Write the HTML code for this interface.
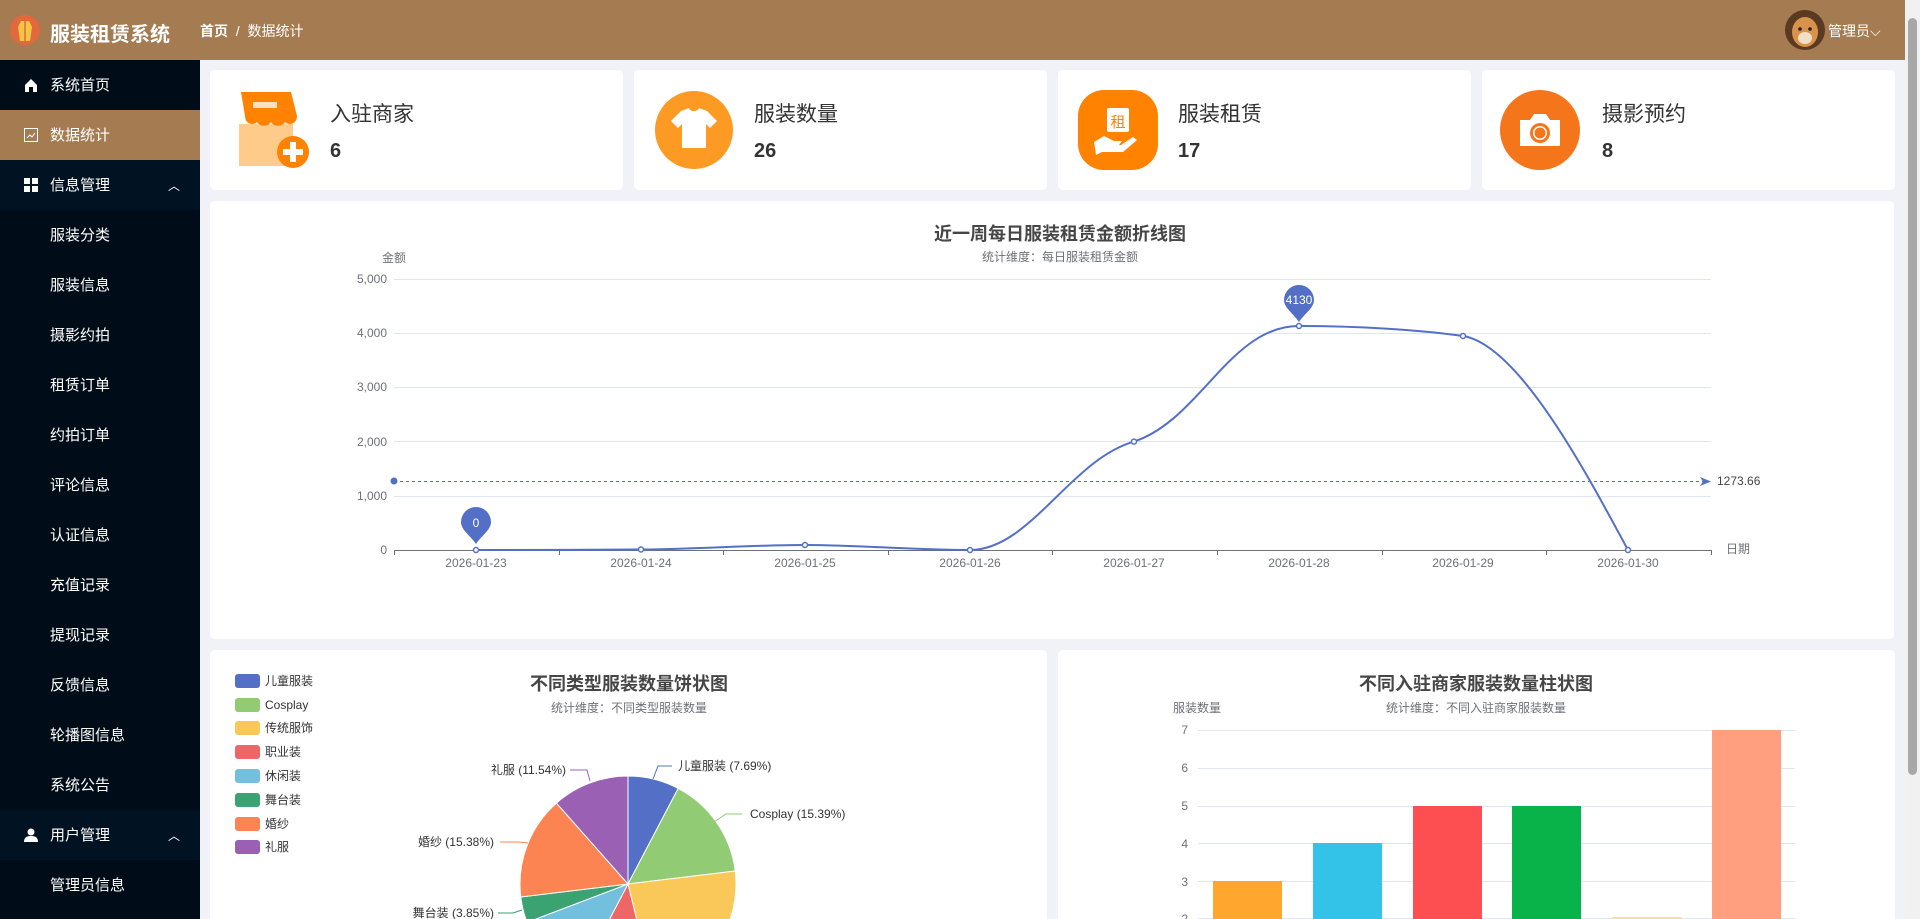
<!DOCTYPE html>
<html><head><meta charset="utf-8"><style>
*{margin:0;padding:0;box-sizing:border-box}
html,body{width:1920px;height:919px;overflow:hidden}
body{background:#f1f2f7;font-family:"Liberation Sans","Noto Sans CJK SC",sans-serif;position:relative}
.hd{position:absolute;left:0;top:0;width:1905px;height:60px;background:#a57b51;color:#fff}
.sb{position:absolute;left:0;top:60px;width:200px;height:859px;background:#000c17;overflow:hidden}
.it{position:absolute;left:0;width:200px;height:50px;line-height:52px;color:#fff;font-size:15px}
.card{position:absolute;background:#fff;border-radius:5px}
.lbl{position:absolute;font-size:21px;color:#333}
.num{position:absolute;font-size:20px;font-weight:bold;color:#333}
.leg{position:absolute;left:235px;font-size:12px;color:#333;height:14px;line-height:14px}
.leg i{display:inline-block;width:25px;height:14px;border-radius:3px;vertical-align:top;margin-right:5px}
</style></head><body>
<div class="hd">
 <svg style="position:absolute;left:10px;top:15px" width="30" height="30"><circle cx="15" cy="15" r="15" fill="#e3683b"/><path d="M11 6h8l3 6-2 14h-10l-2-14z" fill="#f6c545"/><path d="M15 6v20" stroke="#e3683b" stroke-width="1.5"/></svg>
 <div style="position:absolute;left:50px;top:18px;font-size:20px;font-weight:bold">服装租赁系统</div>
 <div style="position:absolute;left:200px;top:21px;font-size:14px"><b>首页</b> &nbsp;/&nbsp; 数据统计</div>
 <svg style="position:absolute;left:1785px;top:10px" width="40" height="40"><circle cx="20" cy="20" r="20" fill="#5a3a20"/><ellipse cx="20" cy="22" rx="13" ry="15" fill="#d9924c"/><ellipse cx="20" cy="28" rx="7" ry="6" fill="#f2e0c6"/><circle cx="15" cy="19" r="1.8" fill="#222"/><circle cx="25" cy="19" r="1.8" fill="#222"/></svg>
 <div style="position:absolute;left:1828px;top:21px;font-size:14px">管理员⌵</div>
</div>
<div class="sb">
 <div class="it" style="top:0;background:#000c17"><svg style="position:absolute;left:24px;top:18px" width="14" height="14"><path d="M7 1L1 7v7h4V9h4v5h4V7z" fill="#fff"/></svg><span style="margin-left:50px">系统首页</span></div>
 <div class="it" style="top:50px;background:#a57b51"><svg style="position:absolute;left:24px;top:18px" width="14" height="14"><rect x="0.5" y="0.5" width="13" height="13" fill="none" stroke="#fff"/><path d="M3 10l3-3 2 2 3-4" stroke="#fff" fill="none"/></svg><span style="margin-left:50px">数据统计</span></div>
 <div class="it" style="top:100px;background:#011323"><svg style="position:absolute;left:24px;top:18px" width="14" height="14"><rect x="0" y="0" width="6" height="6" fill="#fff"/><rect x="8" y="0" width="6" height="6" fill="#fff"/><rect x="0" y="8" width="6" height="6" fill="#fff"/><rect x="8" y="8" width="6" height="6" fill="#fff"/></svg><span style="margin-left:50px">信息管理</span><span style="position:absolute;left:168px;font-size:12px">︿</span></div>
 <div class="it" style="top:150px;padding-left:50px">服装分类</div>
 <div class="it" style="top:200px;padding-left:50px">服装信息</div>
 <div class="it" style="top:250px;padding-left:50px">摄影约拍</div>
 <div class="it" style="top:300px;padding-left:50px">租赁订单</div>
 <div class="it" style="top:350px;padding-left:50px">约拍订单</div>
 <div class="it" style="top:400px;padding-left:50px">评论信息</div>
 <div class="it" style="top:450px;padding-left:50px">认证信息</div>
 <div class="it" style="top:500px;padding-left:50px">充值记录</div>
 <div class="it" style="top:550px;padding-left:50px">提现记录</div>
 <div class="it" style="top:600px;padding-left:50px">反馈信息</div>
 <div class="it" style="top:650px;padding-left:50px">轮播图信息</div>
 <div class="it" style="top:700px;padding-left:50px">系统公告</div>
 <div class="it" style="top:750px;background:#011323"><svg style="position:absolute;left:24px;top:18px" width="14" height="14"><circle cx="7" cy="4" r="3.5" fill="#fff"/><path d="M0 14c0-5 3-6 7-6s7 1 7 6z" fill="#fff"/></svg><span style="margin-left:50px">用户管理</span><span style="position:absolute;left:168px;font-size:12px">︿</span></div>
 <div class="it" style="top:800px;padding-left:50px">管理员信息</div>
</div>
<div style="position:absolute;left:1905px;top:0;width:15px;height:919px;background:#f1f1f1"><div style="position:absolute;left:3px;top:18px;width:9px;height:757px;background:#a8a8a8;border-radius:5px"></div></div>

<div class="card" style="left:210px;top:70px;width:413px;height:120px">
 <svg style="position:absolute;left:23px;top:20px" width="80" height="80"><rect x="6" y="34" width="54" height="42" fill="#ffcb8a"/><path d="M8 2h50l6 24c0 8-8 10-12 6-3 5-11 5-14 0-3 5-11 5-14 0-4 4-12 2-12-6z" fill="#ff8200"/><rect x="20" y="12" width="24" height="6" fill="#ffe1c0"/><circle cx="60" cy="62" r="16" fill="#ff8200"/><path d="M57 52h6v7h7v6h-7v7h-6v-7h-7v-6h7z" fill="#fff"/></svg>
 <div class="lbl" style="left:120px;top:28px">入驻商家</div><div class="num" style="left:120px;top:70px">6</div>
</div>
<div class="card" style="left:634px;top:70px;width:413px;height:120px">
 <svg style="position:absolute;left:21px;top:21px" width="78" height="78"><circle cx="39" cy="39" r="39" fill="#fc9a23"/><path d="M26 20l8-3c1 4 9 4 10 0l8 3 10 10-7 7-4-4v24H27V33l-4 4-7-7z" fill="#fff"/></svg>
 <div class="lbl" style="left:120px;top:28px">服装数量</div><div class="num" style="left:120px;top:70px">26</div>
</div>
<div class="card" style="left:1058px;top:70px;width:413px;height:120px">
 <svg style="position:absolute;left:20px;top:20px" width="80" height="80"><rect x="0" y="0" width="80" height="80" rx="26" fill="#ff8200"/><rect x="29" y="18" width="22" height="24" rx="2" fill="#fff"/><text x="40" y="37" font-size="15" text-anchor="middle" fill="#ff8200" font-family="Noto Sans CJK SC">租</text><path d="M16 52l10-6 10 5h8l-3 4h-10 12l12-8 4 3-14 12H24l-6 3z" fill="#fff"/></svg>
 <div class="lbl" style="left:120px;top:28px">服装租赁</div><div class="num" style="left:120px;top:70px">17</div>
</div>
<div class="card" style="left:1482px;top:70px;width:413px;height:120px">
 <svg style="position:absolute;left:18px;top:20px" width="80" height="80"><circle cx="40" cy="40" r="40" fill="#f5761a"/><path d="M20 30h10l4-6h12l4 6h10v26H20z" fill="#fff"/><circle cx="40" cy="43" r="10" fill="#f5761a"/><circle cx="40" cy="43" r="7" fill="#fff"/><circle cx="40" cy="43" r="5.5" fill="#f5761a"/></svg>
 <div class="lbl" style="left:120px;top:28px">摄影预约</div><div class="num" style="left:120px;top:70px">8</div>
</div>

<div class="card" style="left:210px;top:201px;width:1684px;height:438px"></div>
<svg style="position:absolute;left:0;top:0" width="1905" height="919" font-family="Liberation Sans, Noto Sans CJK SC, sans-serif">
 <text x="1060" y="240" font-size="18" font-weight="bold" fill="#464646" text-anchor="middle">近一周每日服装租赁金额折线图</text>
 <text x="1060" y="261" font-size="12" fill="#6e7079" text-anchor="middle">统计维度：每日服装租赁金额</text>
 <text x="394" y="262" font-size="12" fill="#6e7079" text-anchor="middle">金额</text>
 <g stroke="#e0e6f1"><path d="M394 279.5H1711M394 333.5H1711M394 387.5H1711M394 441.5H1711M394 496.5H1711"/></g>
 <path d="M394 550.5H1711" stroke="#6e7079"/>
 <g stroke="#6e7079"><path d="M394.5 550v5M559.5 550v5M723.5 550v5M888.5 550v5M1052.5 550v5M1217.5 550v5M1382.5 550v5M1546.5 550v5M1711.5 550v5"/></g>
 <g font-size="12" fill="#6e7079" text-anchor="end"><text x="387" y="283">5,000</text><text x="387" y="337">4,000</text><text x="387" y="391">3,000</text><text x="387" y="446">2,000</text><text x="387" y="500">1,000</text><text x="387" y="554">0</text></g>
 <g font-size="12" fill="#6e7079" text-anchor="middle"><text x="476" y="567">2026-01-23</text><text x="641" y="567">2026-01-24</text><text x="805" y="567">2026-01-25</text><text x="970" y="567">2026-01-26</text><text x="1134" y="567">2026-01-27</text><text x="1299" y="567">2026-01-28</text><text x="1463" y="567">2026-01-29</text><text x="1628" y="567">2026-01-30</text><text x="1738" y="553">日期</text></g>
 <path d="M394 481.5H1705" stroke="#5470c6" stroke-dasharray="3,3"/>
 <path d="M1700 477l11 4.5-11 4.5 3-4.5z" fill="#5470c6"/><circle cx="394" cy="481" r="3.5" fill="#5470c6"/>
 <text x="1717" y="485" font-size="12" fill="#464646">1273.66</text>
 <path d="M476 550C540 550 580 550 641 549.5C700 549 750 545 805 545C860 545 910 550 970 550C1030 550 1070 460 1134 441.6C1200 420 1230 326 1299 326C1360 326 1420 330 1463 336C1520 345 1590 480 1628 550" fill="none" stroke="#5470c6" stroke-width="2"/>
 <g fill="#fff" stroke="#5470c6" stroke-width="1.5"><circle cx="476" cy="550" r="2.5"/><circle cx="641" cy="549.5" r="2.5"/><circle cx="805" cy="545" r="2.5"/><circle cx="970" cy="550" r="2.5"/><circle cx="1134" cy="441.6" r="2.5"/><circle cx="1299" cy="326" r="2.5"/><circle cx="1463" cy="336" r="2.5"/><circle cx="1628" cy="550" r="2.5"/></g>
 <path d="M476 544C470 535 461 530 461 522a15 15 0 0130 0c0 8-9 13-15 22z" fill="#5470c6"/><text x="476" y="527" font-size="12" fill="#fff" text-anchor="middle">0</text>
 <path d="M1299 322C1293 313 1284 308 1284 300a15 15 0 0130 0c0 8-9 13-15 22z" fill="#5470c6"/><text x="1299" y="304" font-size="12" fill="#fff" text-anchor="middle">4130</text>
</svg>

<div class="card" style="left:210px;top:650px;width:837px;height:269px;border-radius:5px 5px 0 0"></div>
<div class="card" style="left:1058px;top:650px;width:837px;height:269px;border-radius:5px 5px 0 0"></div>
<div class="leg" style="top:674px"><i style="background:#5470c6"></i>儿童服装</div>
<div class="leg" style="top:698px"><i style="background:#91cc75"></i>Cosplay</div>
<div class="leg" style="top:721px"><i style="background:#fac858"></i>传统服饰</div>
<div class="leg" style="top:745px"><i style="background:#ee6666"></i>职业装</div>
<div class="leg" style="top:769px"><i style="background:#73c0de"></i>休闲装</div>
<div class="leg" style="top:793px"><i style="background:#3ba272"></i>舞台装</div>
<div class="leg" style="top:817px"><i style="background:#fc8452"></i>婚纱</div>
<div class="leg" style="top:840px"><i style="background:#9a60b4"></i>礼服</div>
<svg style="position:absolute;left:0;top:0" width="1905" height="919" font-family="Liberation Sans, Noto Sans CJK SC, sans-serif">
 <text x="629" y="690" font-size="18" font-weight="bold" fill="#464646" text-anchor="middle">不同类型服装数量饼状图</text>
 <text x="629" y="712" font-size="12" fill="#6e7079" text-anchor="middle">统计维度：不同类型服装数量</text>
 <g stroke="#fff" stroke-width="1">
 <path d="M628 884L628 776A108 108 0 0 1 678.2 788.4Z" fill="#5470c6"/>
 <path d="M628 884L678.2 788.4A108 108 0 0 1 735.2 871Z" fill="#91cc75"/>
 <path d="M628 884L735.2 871A108 108 0 0 1 653.8 988.9Z" fill="#fac858"/>
 <path d="M628 884L653.8 988.9A108 108 0 0 1 577.8 979.6Z" fill="#ee6666"/>
 <path d="M628 884L577.8 979.6A108 108 0 0 1 527 922.4Z" fill="#73c0de"/>
 <path d="M628 884L527 922.4A108 108 0 0 1 520.8 897Z" fill="#3ba272"/>
 <path d="M628 884L520.8 897A108 108 0 0 1 556.4 803.1Z" fill="#fc8452"/>
 <path d="M628 884L556.4 803.1A108 108 0 0 1 628 776Z" fill="#9a60b4"/>
 </g>
 <g fill="none" stroke-width="1"><path d="M653 779L658 766H672" stroke="#5470c6"/><path d="M714 822L726 814H742" stroke="#91cc75"/><path d="M528 843L518 842H500" stroke="#fc8452"/><path d="M590 781L587 770H570" stroke="#9a60b4"/><path d="M522 910L513 913H498" stroke="#3ba272"/></g>
 <g font-size="12" fill="#333"><text x="678" y="770">儿童服装 (7.69%)</text><text x="750" y="818">Cosplay (15.39%)</text><text x="494" y="846" text-anchor="end">婚纱 (15.38%)</text><text x="566" y="774" text-anchor="end">礼服 (11.54%)</text><text x="494" y="917" text-anchor="end">舞台装 (3.85%)</text></g>

 <text x="1476" y="690" font-size="18" font-weight="bold" fill="#464646" text-anchor="middle">不同入驻商家服装数量柱状图</text>
 <text x="1476" y="712" font-size="12" fill="#6e7079" text-anchor="middle">统计维度：不同入驻商家服装数量</text>
 <text x="1197" y="712" font-size="12" fill="#6e7079" text-anchor="middle">服装数量</text>
 <g stroke="#e0e6f1"><path d="M1198 730.5H1795M1198 768.5H1795M1198 806.5H1795M1198 843.5H1795M1198 881.5H1795M1198 918.5H1795"/></g>
 <g font-size="12" fill="#6e7079" text-anchor="end"><text x="1188" y="734">7</text><text x="1188" y="772">6</text><text x="1188" y="810">5</text><text x="1188" y="848">4</text><text x="1188" y="886">3</text><text x="1188" y="923">2</text></g>
 <rect x="1213" y="881" width="69" height="40" fill="#ffa62f"/>
 <rect x="1313" y="843" width="69" height="80" fill="#33c3e9"/>
 <rect x="1413" y="806" width="69" height="120" fill="#fd4e51"/>
 <rect x="1512" y="806" width="69" height="120" fill="#0ab34a"/>
 <rect x="1612" y="917" width="69" height="5" fill="#f7dd9a"/>
 <rect x="1712" y="730" width="69" height="200" fill="#ff9f7f"/>
</svg>
</body></html>
